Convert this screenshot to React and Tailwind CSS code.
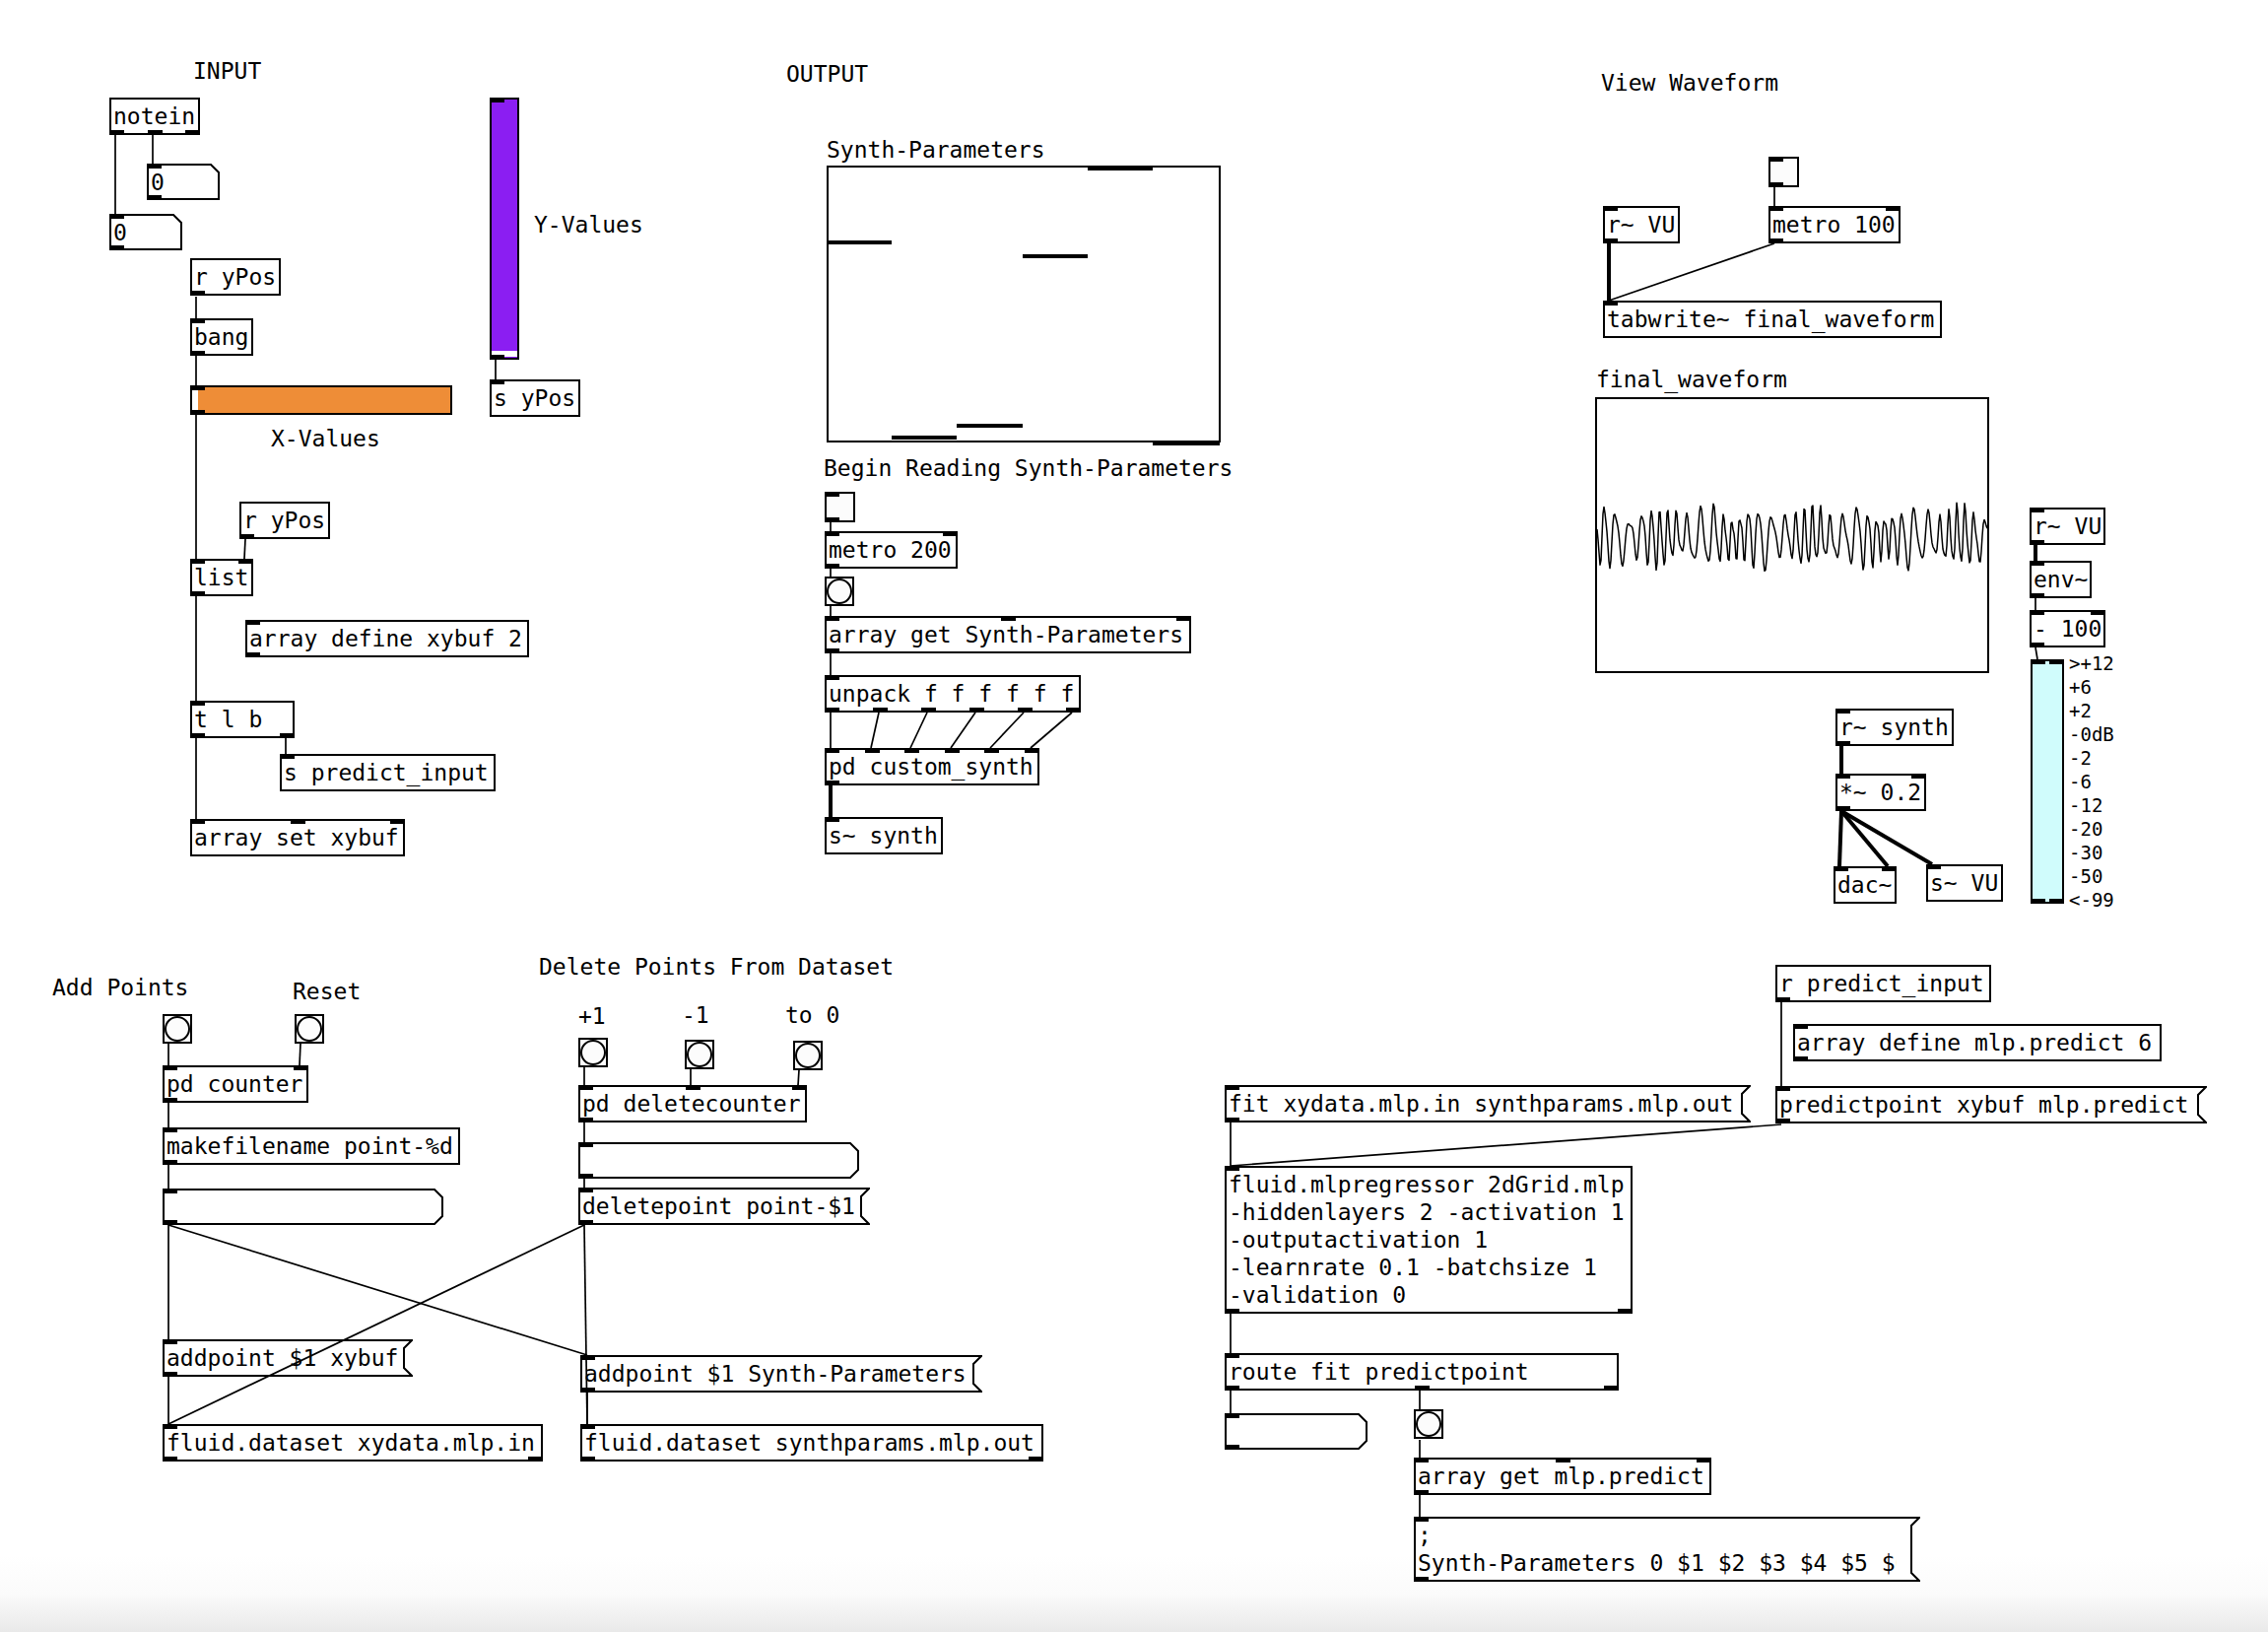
import React from "react";

const Io = ({ n, b, s }) => {
  if (!n) return null;
  const cls = s
    ? b
      ? "absolute left-0 right-0 bottom-0 flex justify-between"
      : "absolute left-0 right-0 top-0 flex justify-between"
    : b
    ? "absolute left-[-2px] right-[-2px] bottom-[-2px] flex justify-between"
    : "absolute left-[-2px] right-[-2px] top-[-2px] flex justify-between";
  return (
    <div className={cls}>
      {Array.from({ length: n }, (_, k) => (
        <div key={k} className="h-[5px] w-[15px] bg-black" />
      ))}
    </div>
  );
};

const Obj = ({ c, t, i = 1, o = 1, tall }) => (
  <div
    className={
      "absolute border-2 border-black bg-white pl-[2px] pt-[3px] leading-[28px] whitespace-pre " +
      (tall ? "" : "h-[38px] ") +
      c
    }
  >
    {t}
    <Io n={i} />
    <Io n={o} b />
  </div>
);

const Msg = ({ c, w, h = 38, t, clip }) => (
  <div className={"absolute " + c}>
    <svg className="absolute left-0 top-0" width={w} height={h}>
      <polygon
        points={`1,1 ${w - 1},1 ${w - 9},9 ${w - 9},${h - 9} ${w - 1},${h - 1} 1,${h - 1}`}
        fill="white"
        stroke="black"
        strokeWidth="2"
      />
    </svg>
    <div
      className={
        "absolute left-0 top-0 bottom-0 overflow-hidden whitespace-pre pl-[4px] pt-[5px] leading-[28px] " +
        (clip ? "right-[24px]" : "right-[10px]")
      }
    >
      {t}
    </div>
    <Io n={1} s />
    <Io n={1} b s />
  </div>
);

const Atom = ({ c, w, h = 37, t = "", both }) => (
  <div className={"absolute " + c}>
    <svg className="absolute left-0 top-0" width={w} height={h}>
      <polygon
        points={
          both
            ? `1,1 ${w - 9},1 ${w - 1},9 ${w - 1},${h - 9} ${w - 9},${h - 1} 1,${h - 1}`
            : `1,1 ${w - 9},1 ${w - 1},9 ${w - 1},${h - 1} 1,${h - 1}`
        }
        fill="white"
        stroke="black"
        strokeWidth="2"
      />
    </svg>
    <div className="absolute left-0 top-0 whitespace-pre pl-[4px] pt-[5px] leading-[28px]">{t}</div>
    <Io n={1} s />
    <Io n={1} b s />
  </div>
);

const Bng = ({ c }) => (
  <div className={"absolute flex h-[30px] w-[30px] items-center justify-center border-2 border-black bg-[#fcfcfc] " + c}>
    <div className="h-[26px] w-[26px] rounded-full border-2 border-black" />
  </div>
);

const Tgl = ({ c }) => (
  <div className={"absolute h-[31px] w-[31px] border-2 border-black bg-[#fcfcfc] " + c}>
    <Io n={1} />
    <Io n={1} b />
  </div>
);

const Lbl = ({ c, t }) => (
  <div className={"absolute whitespace-pre leading-[28px] " + c}>{t}</div>
);

const wires = [
  // INPUT
  [117, 137, 117, 217, 0],
  [155, 137, 155, 166, 0],
  [199, 301, 199, 323, 0],
  [199, 361, 199, 391, 0],
  [199, 421, 199, 567, 0],
  [249, 547, 248, 567, 0],
  [199, 605, 199, 711, 0],
  [290, 749, 290, 765, 0],
  [199, 749, 199, 831, 0],
  [503, 365, 503, 385, 0],
  // OUTPUT
  [843, 530, 843, 539, 0],
  [843, 577, 843, 585, 0],
  [843, 615, 843, 625, 0],
  [843, 663, 843, 685, 0],
  [843, 723, 843, 759, 0],
  [892, 723, 884, 759, 0],
  [941, 723, 924, 759, 0],
  [990, 723, 965, 759, 0],
  [1039, 723, 1005, 759, 0],
  [1088, 723, 1046, 759, 0],
  [843, 797, 843, 829, 1],
  // VIEW WAVEFORM
  [1801, 189, 1801, 209, 0],
  [1801, 247, 1633, 305, 0],
  [1633, 247, 1633, 305, 1],
  [2066, 553, 2066, 569, 1],
  [2066, 607, 2066, 619, 0],
  [2066, 657, 2068, 669, 0],
  [1869, 757, 1869, 785, 1],
  [1869, 823, 1867, 879, 1],
  [1869, 823, 1916, 879, 1],
  [1869, 823, 1961, 877, 1],
  // ADD POINTS
  [171, 1059, 171, 1081, 0],
  [305, 1059, 304, 1081, 0],
  [171, 1119, 171, 1144, 0],
  [171, 1182, 171, 1206, 0],
  [171, 1243, 171, 1359, 0],
  [171, 1243, 596, 1375, 0],
  [171, 1396, 171, 1445, 0],
  [593, 1243, 171, 1445, 0],
  // DELETE
  [593, 1083, 593, 1101, 0],
  [701, 1085, 701, 1101, 0],
  [811, 1086, 810, 1101, 0],
  [593, 1139, 593, 1159, 0],
  [593, 1195, 593, 1205, 0],
  [593, 1243, 596, 1445, 0],
  [596, 1413, 596, 1445, 0],
  // MLP
  [1808, 1017, 1808, 1102, 0],
  [1249, 1139, 1249, 1183, 0],
  [1808, 1141, 1249, 1183, 0],
  [1249, 1333, 1249, 1373, 0],
  [1249, 1411, 1249, 1434, 0],
  [1441, 1411, 1441, 1430, 0],
  [1441, 1461, 1441, 1479, 0],
  [1441, 1517, 1441, 1539, 0],
];

function wavePoints() {
  const pts = [];
  for (let k = 0; k <= 396; k++) {
    const t = k / 396;
    const ph = 2 * Math.PI * 38 * t + 2.2 * Math.sin(2 * Math.PI * 5.3 * t + 0.7) + 1.2;
    const amp = 0.82 + 0.18 * Math.sin(2 * Math.PI * 7.7 * t + 0.4);
    const v =
      amp * Math.sin(ph) +
      0.2 * Math.sin(2.0 * ph + 1.3 * Math.sin(2 * Math.PI * 3.1 * t)) +
      0.08 * Math.sin(2 * Math.PI * 11 * t);
    pts.push(`${2 + k},${(142 - 29 * v).toFixed(1)}`);
  }
  return pts.join(" ");
}

const vuLabels = [">+12", "+6", "+2", "-0dB", "-2", "-6", "-12", "-20", "-30", "-50", "<-99"];

export default function App() {
  const wave = wavePoints();
  return (
    <div className="flex h-[1656px] w-[2302px] flex-col overflow-hidden bg-white font-['DejaVu_Sans_Mono',monospace] text-[23px] text-black">
      <div className="relative h-[1578px] w-full flex-none">
        {/* INPUT */}
        <Lbl c="left-[196px] top-[58px]" t="INPUT" />
        <Obj c="left-[111px] top-[99px] w-[92px]" t="notein" i={0} o={3} />
        <Atom c="left-[149px] top-[166px] w-[74px] h-[37px]" w={74} t="0" />
        <Atom c="left-[111px] top-[217px] w-[74px] h-[37px]" w={74} t="0" />
        <Obj c="left-[193px] top-[262px] w-[92px]" t="r yPos" i={0} />
        <Obj c="left-[193px] top-[323px] w-[64px]" t="bang" />
        <div className="absolute left-[193px] top-[391px] h-[30px] w-[266px] border-2 border-black bg-[#ee8d37]">
          <div className="absolute left-0 top-0 bottom-0 w-[6px] bg-white" />
          <Io n={1} />
          <Io n={1} b />
        </div>
        <Lbl c="left-[275px] top-[431px]" t="X-Values" />
        <div className="absolute left-[497px] top-[99px] h-[266px] w-[30px] border-2 border-black bg-[#8b1ef2]">
          <div className="absolute left-0 right-0 bottom-[1px] h-[6px] bg-white" />
          <Io n={1} />
          <Io n={1} b />
        </div>
        <Lbl c="left-[542px] top-[214px]" t="Y-Values" />
        <Obj c="left-[497px] top-[385px] w-[92px]" t="s yPos" o={0} />
        <Obj c="left-[243px] top-[509px] w-[92px]" t="r yPos" i={0} />
        <Obj c="left-[193px] top-[567px] w-[64px]" t="list" i={2} />
        <Obj c="left-[249px] top-[629px] w-[288px]" t="array define xybuf 2" />
        <Obj c="left-[193px] top-[711px] w-[106px]" t="t l b" o={2} />
        <Obj c="left-[284px] top-[765px] w-[219px]" t="s predict_input" o={0} />
        <Obj c="left-[193px] top-[831px] w-[218px]" t="array set xybuf" i={3} o={0} />

        {/* OUTPUT */}
        <Lbl c="left-[798px] top-[61px]" t="OUTPUT" />
        <Lbl c="left-[839px] top-[138px]" t="Synth-Parameters" />
        <div className="absolute left-[839px] top-[168px] h-[281px] w-[400px] border-2 border-black">
          <svg className="absolute left-[-2px] top-[-2px] overflow-visible" width="400" height="281">
            <g stroke="black" strokeWidth="4">
              <line x1="0" y1="78" x2="66" y2="78" />
              <line x1="66" y1="276" x2="132" y2="276" />
              <line x1="132" y1="264" x2="199" y2="264" />
              <line x1="199" y1="92" x2="265" y2="92" />
              <line x1="265" y1="3" x2="331" y2="3" />
              <line x1="331" y1="282" x2="399" y2="282" />
            </g>
          </svg>
        </div>
        <Lbl c="left-[836px] top-[461px]" t="Begin Reading Synth-Parameters" />
        <Tgl c="left-[837px] top-[499px]" />
        <Obj c="left-[837px] top-[539px] w-[135px]" t="metro 200" i={2} />
        <Bng c="left-[837px] top-[585px]" />
        <Obj c="left-[837px] top-[625px] w-[372px]" t="array get Synth-Parameters" i={3} />
        <Obj c="left-[837px] top-[685px] w-[260px]" t="unpack f f f f f f" o={6} />
        <Obj c="left-[837px] top-[759px] w-[218px]" t="pd custom_synth" i={6} />
        <Obj c="left-[837px] top-[829px] w-[120px]" t="s~ synth" o={0} />

        {/* VIEW WAVEFORM */}
        <Lbl c="left-[1625px] top-[70px]" t="View Waveform" />
        <Tgl c="left-[1795px] top-[159px]" />
        <Obj c="left-[1627px] top-[209px] w-[78px]" t="r~ VU" />
        <Obj c="left-[1795px] top-[209px] w-[134px]" t="metro 100" i={2} />
        <Obj c="left-[1627px] top-[305px] w-[344px]" t="tabwrite~ final_waveform" o={0} />
        <Lbl c="left-[1620px] top-[371px]" t="final_waveform" />
        <div className="absolute left-[1619px] top-[403px] h-[280px] w-[400px] border-2 border-black">
          <svg className="absolute left-[-2px] top-[-2px] overflow-visible" width="400" height="280">
            <polyline points={wave} fill="none" stroke="black" strokeWidth="1.5" strokeLinejoin="round" />
          </svg>
        </div>
        <Obj c="left-[2060px] top-[515px] w-[77px]" t="r~ VU" />
        <Obj c="left-[2060px] top-[569px] w-[63px]" t="env~" />
        <Obj c="left-[2060px] top-[619px] w-[77px]" t="- 100" i={2} />
        <div className="absolute left-[2061px] top-[669px] h-[248px] w-[34px] border-2 border-black bg-[#d0fcfc]">
          <Io n={2} />
          <Io n={2} b />
        </div>
        <div className="absolute left-[2100px] top-[661px] flex flex-col text-[19px] leading-[24px]">
          {vuLabels.map((l) => (
            <div key={l}>{l}</div>
          ))}
        </div>
        <Obj c="left-[1863px] top-[719px] w-[120px]" t="r~ synth" />
        <Obj c="left-[1863px] top-[785px] w-[92px]" t="*~ 0.2" i={2} />
        <Obj c="left-[1861px] top-[879px] w-[64px]" t="dac~" i={2} o={0} />
        <Obj c="left-[1955px] top-[877px] w-[78px]" t="s~ VU" o={0} />

        {/* ADD POINTS */}
        <Lbl c="left-[53px] top-[988px]" t="Add Points" />
        <Lbl c="left-[297px] top-[992px]" t="Reset" />
        <Bng c="left-[165px] top-[1029px]" />
        <Bng c="left-[299px] top-[1029px]" />
        <Obj c="left-[165px] top-[1081px] w-[148px]" t="pd counter" i={2} />
        <Obj c="left-[165px] top-[1144px] w-[302px]" t="makefilename point-%d" />
        <Atom c="left-[165px] top-[1206px] w-[285px] h-[37px]" w={285} both />
        <Msg c="left-[165px] top-[1359px] w-[254px] h-[38px]" w={254} t="addpoint $1 xybuf" />
        <Obj c="left-[165px] top-[1445px] w-[386px]" t="fluid.dataset xydata.mlp.in" o={2} />

        {/* DELETE */}
        <Lbl c="left-[547px] top-[967px]" t="Delete Points From Dataset" />
        <Lbl c="left-[587px] top-[1017px]" t="+1" />
        <Lbl c="left-[692px] top-[1016px]" t="-1" />
        <Lbl c="left-[797px] top-[1016px]" t="to 0" />
        <Bng c="left-[587px] top-[1053px]" />
        <Bng c="left-[695px] top-[1055px]" />
        <Bng c="left-[805px] top-[1056px]" />
        <Obj c="left-[587px] top-[1101px] w-[232px]" t="pd deletecounter" i={3} />
        <Atom c="left-[587px] top-[1159px] w-[285px] h-[37px]" w={285} both />
        <Msg c="left-[587px] top-[1205px] w-[296px] h-[38px]" w={296} t="deletepoint point-$1" />
        <Msg c="left-[589px] top-[1375px] w-[408px] h-[38px]" w={408} t="addpoint $1 Synth-Parameters" />
        <Obj c="left-[589px] top-[1445px] w-[470px]" t="fluid.dataset synthparams.mlp.out" o={2} />

        {/* MLP */}
        <Obj c="left-[1802px] top-[979px] w-[219px]" t="r predict_input" i={0} />
        <Obj c="left-[1820px] top-[1039px] w-[374px]" t="array define mlp.predict 6" />
        <Msg c="left-[1243px] top-[1101px] w-[534px] h-[38px]" w={534} t="fit xydata.mlp.in synthparams.mlp.out" />
        <Msg c="left-[1802px] top-[1102px] w-[438px] h-[38px]" w={438} t="predictpoint xybuf mlp.predict" />
        <Obj
          tall
          c="left-[1243px] top-[1183px] h-[150px] w-[414px]"
          t={"fluid.mlpregressor 2dGrid.mlp\n-hiddenlayers 2 -activation 1\n-outputactivation 1\n-learnrate 0.1 -batchsize 1\n-validation 0"}
          o={2}
        />
        <Obj c="left-[1243px] top-[1373px] w-[400px]" t="route fit predictpoint" o={3} />
        <Atom c="left-[1243px] top-[1434px] w-[145px] h-[37px]" w={145} both />
        <Bng c="left-[1435px] top-[1430px]" />
        <Obj c="left-[1435px] top-[1479px] w-[302px]" t="array get mlp.predict" i={3} />
        <Msg clip c="left-[1435px] top-[1539px] w-[514px] h-[66px]" w={514} h={66} t={";\nSynth-Parameters 0 $1 $2 $3 $4 $5 $6"} />

        <svg className="pointer-events-none absolute left-0 top-0" width="2302" height="1610">
          {wires.map(([x1, y1, x2, y2, s], k) => (
            <line key={k} x1={x1} y1={y1} x2={x2} y2={y2} stroke="black" strokeWidth={s ? 4 : 1.7} />
          ))}
        </svg>
      </div>
      <div className="flex-1 bg-linear-to-b from-white via-[#fbfbfb] to-[#e9e9e9]" />
    </div>
  );
}
